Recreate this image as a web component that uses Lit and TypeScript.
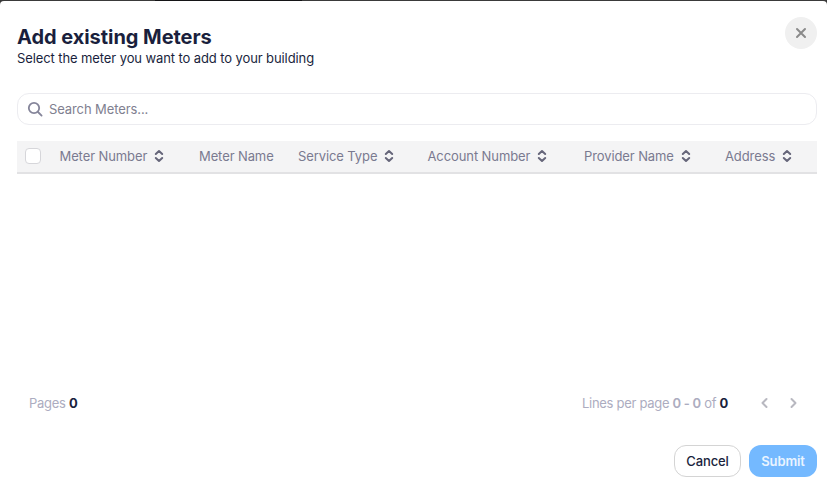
import { LitElement, css, html } from 'lit'
import { customElement } from 'lit/decorators.js'

const columns = [
  { label: 'Meter Number', width: 139.5, sort: true },
  { label: 'Meter Name', width: 99, sort: false },
  { label: 'Service Type', width: 129.5, sort: true },
  { label: 'Account Number', width: 156.5, sort: true },
  { label: 'Provider Name', width: 141, sort: true },
  { label: 'Address', width: 75, sort: true },
]

const sortIcon = html`<svg class="sort" viewBox="0 0 10 14" width="10" height="14" fill="none" stroke="currentColor" stroke-width="2" stroke-linecap="round" stroke-linejoin="round">
  <path d="M1.8 5 5 2l3.2 3M1.8 9 5 12l3.2-3" />
</svg>`

@customElement('app-root')
export class AppRoot extends LitElement {
  static styles = css`
    :host {
      display: block;
      height: 487px;
      overflow: hidden;
      background: #fff;
      font-family: Inter, 'Noto Sans', sans-serif;
      letter-spacing: -0.1px;
      color: #1a1f3d;
    }

    .backdrop {
      height: 487px;
      background: #3a3a3a;
    }

    /* Text hinter dem Dialog, nur ein Pixel sichtbar */
    .behind {
      width: 147px;
      height: 1px;
      margin-left: 155px;
      background: #141416;
    }

    .dialog {
      box-sizing: border-box;
      height: 486px;
      padding: 16px 10px 0 17px;
      background: #fff;
      border-radius: 4px 4px 0 0;
    }

    /* Kopfbereich */
    .head {
      display: flex;
      justify-content: space-between;
      align-items: flex-start;
      height: 76px;
    }

    h1 {
      margin: 8px 0 0;
      font-size: 20px;
      line-height: 24px;
      font-weight: 700;
      letter-spacing: -0.05px;
    }

    .sub {
      margin: 0;
      font-size: 13px;
      line-height: 18px;
    }

    .close {
      width: 32px;
      height: 32px;
      border-radius: 50%;
      background: #f0f0f0;
      display: flex;
      align-items: center;
      justify-content: center;
      color: #8a8a8a;
    }

    /* Suche */
    .search {
      box-sizing: border-box;
      width: 800px;
      height: 32px;
      display: flex;
      align-items: center;
      gap: 6px;
      padding-left: 9px;
      border: 1px solid #ececf0;
      border-radius: 12px;
      font-size: 13px;
      color: #808090;
    }

    /* Tabelle */
    .thead {
      box-sizing: border-box;
      width: 800px;
      height: 33px;
      margin-top: 16px;
      padding-bottom: 1px;
      display: flex;
      align-items: center;
      background: #f4f4f5;
      border-bottom: 2px solid #e2e2e4;
      font-size: 13px;
      color: #7a7a90;
    }

    .check {
      box-sizing: border-box;
      flex: none;
      width: 16px;
      height: 16px;
      margin: 0 18.5px 0 8px;
      background: #fff;
      border: 1px solid #d6d6da;
      border-radius: 4px;
    }

    .col {
      flex: none;
      display: flex;
      align-items: center;
      gap: 7px;
      white-space: nowrap;
    }

    .sort {
      color: #66667a;
    }

    .body {
      height: 213px;
    }

    /* Seitennavigation */
    .pager {
      width: 800px;
      box-sizing: border-box;
      height: 32px;
      padding: 0 18px 0 12px;
      display: flex;
      justify-content: space-between;
      align-items: center;
      font-size: 13px;
      letter-spacing: -0.3px;
      color: #acacc0;
    }

    .pager b {
      font-weight: 600;
    }

    .pager b.dark {
      color: #1a1f3d;
      font-weight: 700;
    }

    .right {
      display: flex;
      align-items: center;
    }

    .arrows {
      display: flex;
      gap: 16px;
      margin-left: 31px;
      color: #b8b8c0;
    }

    /* Schaltflächen */
    .actions {
      width: 800px;
      margin-top: 26px;
      display: flex;
      justify-content: flex-end;
      gap: 8px;
    }

    .btn {
      box-sizing: border-box;
      height: 32px;
      display: flex;
      align-items: center;
      justify-content: center;
      border-radius: 12px;
      font-size: 13px;
      font-weight: 500;
    }

    .cancel {
      width: 67px;
      border: 1px solid #d4d4d4;
    }

    .submit {
      width: 68px;
      background: #74b9ff;
      color: #eaf4ff;
      font-weight: 600;
    }
  `

  render() {
    return html`
      <div class="backdrop">
        <div class="behind"></div>
        <div class="dialog">
          <div class="head">
            <div>
              <h1>Add existing Meters</h1>
              <p class="sub">Select the meter you want to add to your building</p>
            </div>
            <div class="close">
              <svg viewBox="0 0 12 12" width="12" height="12" fill="none" stroke="currentColor" stroke-width="2" stroke-linecap="round">
                <path d="M2 2l8 8M10 2l-8 8" />
              </svg>
            </div>
          </div>

          <div class="search">
            <svg viewBox="0 0 16 16" width="16" height="16" fill="none" stroke="#85859a" stroke-width="1.8" stroke-linecap="round">
              <circle cx="7" cy="7" r="5.2" />
              <path d="M11 11l3.6 3.6" />
            </svg>
            <span>Search Meters...</span>
          </div>

          <div class="thead">
            <div class="check"></div>
            ${columns.map(
              (c) => html`<div class="col" style="width:${c.width}px">
                <span>${c.label}</span>${c.sort ? sortIcon : ''}
              </div>`,
            )}
          </div>

          <div class="body"></div>

          <div class="pager">
            <div>Pages <b class="dark">0</b></div>
            <div class="right">
              <span>Lines per page <b>0 - 0</b> of <b class="dark">0</b></span>
              <div class="arrows">
                <svg viewBox="0 0 12 12" width="12" height="12" fill="none" stroke="currentColor" stroke-width="2" stroke-linecap="round" stroke-linejoin="round"><path d="M7.5 2 3.5 6l4 4" /></svg>
                <svg viewBox="0 0 12 12" width="12" height="12" fill="none" stroke="currentColor" stroke-width="2" stroke-linecap="round" stroke-linejoin="round"><path d="M4.5 2l4 4-4 4" /></svg>
              </div>
            </div>
          </div>

          <div class="actions">
            <div class="btn cancel">Cancel</div>
            <div class="btn submit">Submit</div>
          </div>
        </div>
      </div>
    `
  }
}
